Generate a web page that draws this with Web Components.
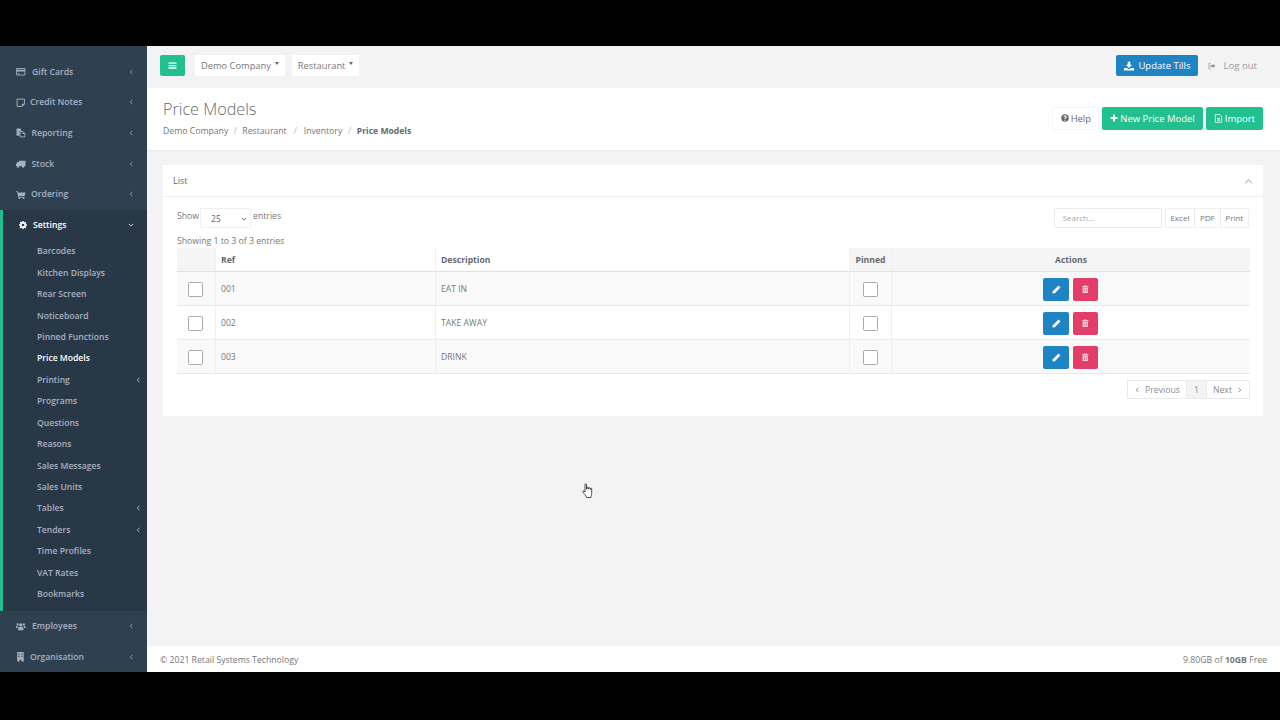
<!DOCTYPE html>
<html lang="en">
  <head>
    <meta charset="UTF-8" />
    <title>Price Models</title>
    <style>
      html, body { margin: 0; height: 720px; overflow: hidden; background: #000; }
      body { font-family: "Open Sans", "Liberation Sans", sans-serif; font-size: 9px; color: #676a6c; padding-top: 46px; box-sizing: border-box; }
    </style>
  </head>

  <body>
    <app-shell>
      <side-bar slot="side">
        <nav-link icon="card" arrow="left" gap="16">Gift Cards</nav-link>
        <nav-link icon="note" arrow="left" gap="14">Credit Notes</nav-link>
        <nav-link icon="files" arrow="left" gap="15.5">Reporting</nav-link>
        <nav-link icon="truck" arrow="left" gap="15.5">Stock</nav-link>
        <nav-link icon="cart" arrow="left" gap="15">Ordering</nav-link>
        <nav-group>
          <nav-link slot="head" icon="cog" arrow="down" gap="14" open>Settings</nav-link>
          <sub-link>Barcodes</sub-link>
          <sub-link>Kitchen Displays</sub-link>
          <sub-link>Rear Screen</sub-link>
          <sub-link>Noticeboard</sub-link>
          <sub-link>Pinned Functions</sub-link>
          <sub-link active>Price Models</sub-link>
          <sub-link arrow>Printing</sub-link>
          <sub-link>Programs</sub-link>
          <sub-link>Questions</sub-link>
          <sub-link>Reasons</sub-link>
          <sub-link>Sales Messages</sub-link>
          <sub-link>Sales Units</sub-link>
          <sub-link arrow>Tables</sub-link>
          <sub-link arrow>Tenders</sub-link>
          <sub-link>Time Profiles</sub-link>
          <sub-link>VAT Rates</sub-link>
          <sub-link>Bookmarks</sub-link>
        </nav-group>
        <nav-link icon="users" arrow="left" gap="16">Employees</nav-link>
        <nav-link icon="building" arrow="left" gap="14">Organisation</nav-link>
      </side-bar>
      <top-bar></top-bar>
      <page-heading></page-heading>
      <list-panel>
        <price-row ref-no="001" desc="EAT IN"></price-row>
        <price-row ref-no="002" desc="TAKE AWAY"></price-row>
        <price-row ref-no="003" desc="DRINK"></price-row>
      </list-panel>
      <page-footer></page-footer>
    </app-shell>
    <hand-cursor></hand-cursor>

    <script>
      const ICONS = {
        card: '<path d="M1 2.500h14v11H1z" fill="none" stroke="currentColor" stroke-width="1.500"/><path d="M1 4.500h14v3H1zM3 10h3v1.200H3z"/>',
        note: '<path d="M1.800 1.800h12.400v8.400l-4 4H1.800z" fill="none" stroke="currentColor" stroke-width="1.600"/><path d="M10 14v-4.500h4.500v1z"/>',
        files: '<path d="M1 1h6l2 2v2H6v8H1z"/><path d="M7 6h5l3 3v6H7z" fill="none" stroke="currentColor" stroke-width="1.500"/><path d="M11 6l4 4h-4z"/>',
        truck: '<path d="M5 3h11v9H5zM1 7l2-2.500h2V12H0V8z"/><circle cx="3.500" cy="13" r="1.800"/><circle cx="12" cy="13" r="1.800"/>',
        cart: '<path d="M0 2h3l.5 2H16l-1.500 6H5l.3 1.500H14V13H4L2 3.500H0z"/><circle cx="5.500" cy="14.500" r="1.300"/><circle cx="13" cy="14.500" r="1.300"/>',
        cog: '<path fill-rule="evenodd" d="M6.700 0h2.600l.4 2.300 1.300.5L12.900 1.500 14.700 3.300 13.300 5.200l.5 1.300L16 6.900v2.500l-2.200.4-.5 1.300 1.300 1.900-1.800 1.800-1.900-1.300-1.300.5L9.300 16H6.700l-.4-2.200-1.300-.5-1.900 1.300-1.800-1.800L2.600 10.800l-.5-1.300L0 9.100V6.700l2.200-.4.500-1.300L1.400 3.100 3.200 1.300 5 2.700l1.300-.5zM8 5.300a2.700 2.700 0 1 0 0 5.400 2.700 2.700 0 0 0 0-5.400z"/>',
        users: '<circle cx="8" cy="5" r="2.800"/><circle cx="2.800" cy="4" r="1.900"/><circle cx="13.200" cy="4" r="1.900"/><path d="M3.500 14V10.500Q3.500 8.500 5.500 8.300h5Q12.500 8.500 12.500 10.500V14zM0 10V8q0-1.800 2-1.800h1.800Q2.500 7.500 2.500 10zM16 10V8q0-1.800-2-1.800h-1.800q1.300 1.300 1.300 3.800z"/>',
        building: '<path fill-rule="evenodd" d="M2 0h11v16H9v-3H6v3H2zM4 2.500v2h2v-2zM9 2.500v2h2v-2zM4 6.500v2h2v-2zM9 6.500v2h2v-2z"/>',
        bars: '<path d="M1 2.500h14v2.300H1zM1 6.900h14v2.300H1zM1 11.300h14v2.300H1z"/>',
        download: '<path d="M6 1h4v5h3L8 11 3 6h3zM0 11h4.500L8 13l3.500-2H16v4H0z"/>',
        signout: '<path d="M5.500 2.500H2v11h3.500" fill="none" stroke="currentColor" stroke-width="1.700"/><path d="M9.500 3.500L15 8l-5.500 4.500V10H5V6h4.500z"/>',
        help: '<path fill-rule="evenodd" d="M8 .5a7.500 7.500 0 1 0 0 15 7.500 7.500 0 0 0 0-15zM6.900 11.300h2.200v2H6.900zM8 3c2 0 3.400 1.100 3.400 2.800 0 2.200-2.300 2.300-2.300 4H6.900c0-2.600 2.200-2.800 2.200-3.900C9.100 5.300 8.700 5 8 5c-.7 0-1.200.4-1.700 1L5 4.900C5.700 3.700 6.700 3 8 3z"/>',
        plus: '<path d="M6 1h4v5h5v4h-5v5H6v-5H1V6h5z"/>',
        excel: '<path d="M2.500 1h8l3 3v11h-11z" fill="none" stroke="currentColor" stroke-width="1.300"/><path d="M5 6.500h1.800L8 8.500l1.200-2H11L9 9.800l2 3.200H9.200L8 11l-1.200 2H5l2-3.200z"/>',
        pencil: '<path d="M11.500 1l3.500 3.500L5 14.500 .8 15.200 1.500 11z"/>',
        trash: '<path fill-rule="evenodd" d="M6 .8h4l.8 1.700H14v1.800H2V2.500h3.200zM3 5h10v10.200H3zM5.500 7v6h1.200V7zM9.300 7v6h1.200V7z"/>'
      }

      const icon = (name, size) =>
        `<svg viewBox="0 0 16 16" width="${size}" height="${size}" fill="currentColor" aria-hidden="true">${ICONS[name]}</svg>`

      const chevron = (dir, size = 6) => {
        const pts = { left: '6,1 3,4 6,7', right: '2,1 5,4 2,7', down: '1,2.500 4,5.500 7,2.500', up: '1,5.500 4,2.500 7,5.500' }
        return `<svg viewBox="0 0 8 8" width="${size}" height="${size}" fill="none" stroke="currentColor" stroke-width="1.300"><polyline points="${pts[dir]}"/></svg>`
      }

      // every element here is just markup + styles in an open shadow root
      class Base extends HTMLElement {
        constructor () {
          super()
          this.attachShadow({ mode: 'open' })
        }
        connectedCallback () {
          this.shadowRoot.innerHTML = this.render()
        }
      }

      customElements.define('app-shell', class extends Base {
        render () {
          return `<style>
            :host { display: grid; grid-template-columns: 147px 1fr; height: 626px; background: #f3f3f4; overflow: hidden; }
            .main { display: flex; flex-direction: column; min-width: 0; height: 626px; }
          </style>
          <div><slot name="side"></slot></div>
          <div class="main"><slot></slot></div>`
        }
      })

      customElements.define('side-bar', class extends Base {
        render () {
          return `<style>
            :host { display: block; height: 626px; overflow: hidden; background: #2f4050; padding-top: 10.4px; box-sizing: border-box; }
          </style><slot></slot>`
        }
      })

      customElements.define('nav-link', class extends Base {
        render () {
          const open = this.hasAttribute('open')
          return `<style>
            :host { display: flex; align-items: center; height: 30.7px; padding-left: 16px; padding-right: 13px; box-sizing: border-box;
              color: ${open ? '#fff' : '#a7b1c2'}; font-weight: 600; font-size: 8.65px; }
            .ic { display: flex; width: ${this.getAttribute('gap')}px; }
            .label { flex: 1; }
            .ar { display: flex; opacity: .8; }
            svg { display: block; }
          </style>
          <span class="ic">${icon(this.getAttribute('icon'), open ? 8 : 9.5)}</span>
          <span class="label"><slot></slot></span>
          <span class="ar">${chevron(this.getAttribute('arrow'))}</span>`
        }
      })

      customElements.define('nav-group', class extends Base {
        render () {
          return `<style>
            :host { display: block; background: #293846; border-left: 3px solid #1fc08e; }
            .subs { display: block; padding-bottom: 6.2px; margin-left: -3px; }
          </style>
          <slot name="head"></slot>
          <div class="subs"><slot></slot></div>`
        }
      })

      customElements.define('sub-link', class extends Base {
        render () {
          const active = this.hasAttribute('active')
          return `<style>
            :host { display: flex; align-items: center; justify-content: space-between; height: 21.44px; padding: 0 6px 0 37px; box-sizing: border-box;
              color: ${active ? '#fff' : '#a7b1c2'}; font-weight: 600; font-size: 8.6px; }
            svg { display: block; }
          </style>
          <span><slot></slot></span>${this.hasAttribute('arrow') ? chevron('left') : ''}`
        }
      })

      customElements.define('solid-button', class extends Base {
        render () {
          const bg = this.getAttribute('bg')
          return `<style>
            :host { display: inline-flex; align-items: center; justify-content: center; gap: 2px; box-sizing: border-box; background: ${bg}; color: #fff; border-radius: 2px; font-size: 9.5px; height: 100%; padding: 0 8px; white-space: nowrap; }
            svg { display: block; flex: none; }
          </style>
          ${this.hasAttribute('icon') ? icon(this.getAttribute('icon'), +(this.getAttribute('size') || 9)) : ''}<slot></slot>`
        }
      })

      customElements.define('org-select', class extends Base {
        render () {
          return `<style>
            :host { display: inline-flex; align-items: center; height: 21px; background: #fff; padding: 0 6px; border-radius: 1px; font-size: 9.3px; color: #75787a; }
            i { width: 0; height: 0; border: 2.5px solid transparent; border-top: 3px solid #676a6c; border-bottom: 0; margin: 0 0 5px 4px; }
          </style><slot></slot><i></i>`
        }
      })

      customElements.define('top-bar', class extends Base {
        render () {
          return `<style>
            :host { display: flex; align-items: center; height: 42px; flex: none; padding: 0 23px 3px 13px; box-sizing: border-box; background: #f3f3f4; }
            .menu { height: 21px; width: 25px; margin-right: 10px; padding: 0; }
            org-select { margin-right: 7px; }
            .sp { flex: 1; }
            .tills { height: 21px; width: 82px; font-size: 9.5px; padding: 0; gap: 4px; }
            .out { display: flex; align-items: center; gap: 7px; margin-left: 10px; color: #999c9e; font-size: 9.6px; }
            svg { display: block; }
          </style>
          <solid-button class="menu" bg="#23c08f" icon="bars" size="9"></solid-button>
          <org-select>Demo Company</org-select>
          <org-select>Restaurant</org-select>
          <span class="sp"></span>
          <solid-button class="tills" bg="#1f84c4" icon="download" size="10">Update Tills</solid-button>
          <span class="out">${icon('signout', 8)}Log out</span>`
        }
      })

      customElements.define('page-heading', class extends Base {
        render () {
          return `<style>
            :host { display: flex; align-items: center; justify-content: space-between; height: 63px; flex: none; padding: 0 17px 3px 16px; box-sizing: border-box; background: #fff; border-bottom: 1px solid #e7eaec; }
            h2 { margin: 0 0 5px; font-size: 16.2px; font-weight: 300; line-height: 21px; color: #676a6c; }
            .crumbs { display: flex; font-size: 8.7px; color: #75787a; }
            .crumbs span { color: #b5b7b9; text-align: center; }
            .crumbs b { font-weight: 700; font-size: 8.6px; color: #676a6c; }
            .btns { display: flex; height: 23px; gap: 3px; margin-top: 1px; }
            .help { display: flex; align-items: center; justify-content: center; gap: 2px; width: 47px; color: #676a6c; border-radius: 2px; border: 1px solid #f6f6f6; box-sizing: border-box; font-size: 9.4px; }
            svg { display: block; }
          </style>
          <div>
            <h2>Price Models</h2>
            <div class="crumbs">Demo Company<span style="width:14px">/</span>Restaurant<span style="width:17px">/</span>Inventory<span style="width:14.5px">/</span><b>Price Models</b></div>
          </div>
          <div class="btns">
            <div class="help">${icon('help', 8)}Help</div>
            <solid-button bg="#23c08f" icon="plus" size="8">New Price Model</solid-button>
            <solid-button bg="#23c08f" icon="excel" size="9">Import</solid-button>
          </div>`
        }
      })

      customElements.define('list-panel', class extends Base {
        render () {
          return `<style>
            :host { display: block; margin: 14px 17px 0 16px; height: 251px; flex: none; background: #fff; font-size: 8px; }
            .title { display: flex; align-items: center; justify-content: space-between; height: 32px; padding: 0 10px; border-bottom: 1px solid #eeeff0; box-sizing: border-box; font-size: 9px; color: #676a6c; }
            .title svg { color: #c4c6c8; margin-top: 2px; }
            .body { padding: 0 13px 0 14px; }
            .tools { display: flex; align-items: center; height: 27px; margin-top: 7px; color: #75787a; }
            .show { display: flex; align-items: center; margin-top: -3px; font-size: 8.7px; }
            .sel { display: flex; align-items: center; justify-content: space-between; width: 51px; height: 20px; box-sizing: border-box; border: 1px solid #f0f0f0; border-radius: 1px; padding: 2px 3px 0 10px; margin: 3px 2px 0 1px; font-size: 8.5px; color: #676a6c; }
            .sp { flex: 1; }
            .search { width: 108px; height: 20px; border: 1px solid #eaeaea; box-sizing: border-box; padding: 0 8px; display: flex; align-items: center; color: #a6a8aa; margin-right: 3px; border-radius: 1px; }
            .xb { display: flex; border: 1px solid #f0f0f0; height: 20px; box-sizing: border-box; border-radius: 1px; margin-right: 1px; }
            .xb span { display: flex; align-items: center; padding: 0 4.8px; border-left: 1px solid #eaeaea; }
            .xb span:first-child { border-left: 0; }
            .info { font-size: 8.7px; color: #75787a; line-height: 13px; margin-top: 4px; height: 13px; }
            .head { display: grid; grid-template-columns: 38px 220px 414px 42px 1fr; height: 24px; border-bottom: 1px solid #e0e1e2; box-sizing: border-box; font-weight: 700; color: #676a6c; font-size: 8.6px; }
            .head div { display: flex; align-items: center; padding-left: 5px; border-left: 1px solid #f1f1f2; }
            .head div:first-child { border-left: 0; background: #f5f5f6; }
            .head .mid { justify-content: center; background: #f5f5f6; padding: 0; }
            .pager { display: flex; justify-content: flex-end; margin-top: 6px; font-size: 8.7px; color: #8b8d8f; }
            .pager div { display: flex; align-items: center; gap: 5px; height: 19px; padding: 0 6px; border: 1px solid #eaeaea; border-left: 0; box-sizing: border-box; }
            .pager div:first-child { border-left: 1px solid #eaeaea; border-radius: 1px 0 0 1px; }
            .pager .cur { background: #f3f3f4; padding: 0 7px; }
            svg { display: block; }
          </style>
          <div class="title">List ${chevron('up', 9)}</div>
          <div class="body">
            <div class="tools">
              <div class="show">Show<span class="sel">25 ${chevron('down')}</span>entries</div>
              <span class="sp"></span>
              <div class="search">Search...</div>
              <div class="xb"><span>Excel</span><span>PDF</span><span>Print</span></div>
            </div>
            <div class="info">Showing 1 to 3 of 3 entries</div>
            <div class="head"><div></div><div>Ref</div><div>Description</div><div class="mid">Pinned</div><div class="mid">Actions</div></div>
            <slot></slot>
            <div class="pager">
              <div>${chevron('left')}Previous</div><div class="cur">1</div><div>Next${chevron('right')}</div>
            </div>
          </div>`
        }
      })

      customElements.define('check-box', class extends Base {
        render () {
          return `<style>
            :host { display: block; width: 15px; height: 15px; box-sizing: border-box; border: 1px solid #a9abad; border-radius: 1.5px; background: #fff; }
          </style>`
        }
      })

      customElements.define('price-row', class extends Base {
        render () {
          return `<style>
            :host { display: grid; grid-template-columns: 38px 220px 414px 42px 1fr; height: 34px; box-sizing: border-box; border-bottom: 1px solid #e7eaec; font-size: 8.6px; color: #75787a; }
            :host(:nth-of-type(odd)) { background: #f9f9f9; }
            .c { display: flex; align-items: center; padding: 1px 0 0 5px; border-left: 1px solid #eeeff0; }
            .first { border-left: 0; padding: 1px 1px 0 0; justify-content: center; }
            .mid { padding: 1px 0 0; justify-content: center; }
            .act { padding: 1px 1px 0 0; justify-content: center; gap: 3.5px; }
            .btn { display: flex; align-items: center; justify-content: center; height: 23px; border-radius: 2px; color: #fff; }
            .edit { background: #1f84c4; width: 26px; }
            .del { background: #e33d69; width: 25.5px; color: #f9d5df; }
            svg { display: block; }
          </style>
          <div class="c first"><check-box></check-box></div>
          <div class="c">${this.getAttribute('ref-no')}</div>
          <div class="c">${this.getAttribute('desc')}</div>
          <div class="c mid"><check-box></check-box></div>
          <div class="c act">
            <div class="btn edit">${icon('pencil', 9)}</div>
            <div class="btn del">${icon('trash', 8.5)}</div>
          </div>`
        }
      })

      customElements.define('page-footer', class extends Base {
        render () {
          return `<style>
            :host { display: flex; align-items: center; justify-content: space-between; height: 26px; margin-top: auto; flex: none; padding: 2px 13px 0; box-sizing: border-box; background: #fff; font-size: 8.7px; color: #75787a; }
            b { font-weight: 700; }
          </style>
          <span>© 2021 Retail Systems Technology</span><span>9.80GB of <b>10GB</b> Free</span>`
        }
      })

      customElements.define('hand-cursor', class extends Base {
        render () {
          return `<style>
            :host { position: absolute; left: 582px; top: 483px; width: 12px; height: 16px; }
            svg { display: block; }
          </style>
          <svg viewBox="0 0 12 16" width="12" height="16">
            <path d="M3 1.500c0-1 1.500-1 1.500 0V6h.5V4.800c0-.8 1.300-.8 1.300 0V6h.4V5.200c0-.8 1.300-.8 1.300 0V6.300h.4V5.800c0-.8 1.300-.8 1.300 0v4.500c0 1.500-.8 2.300-.8 4.200H4.500C4.200 12.500 2 11 1 9c-.5-1 .5-1.700 1.200-1L3 9z" fill="#fff" stroke="#222" stroke-width=".8"/>
          </svg>`
        }
      })
    </script>
  </body>
</html>
